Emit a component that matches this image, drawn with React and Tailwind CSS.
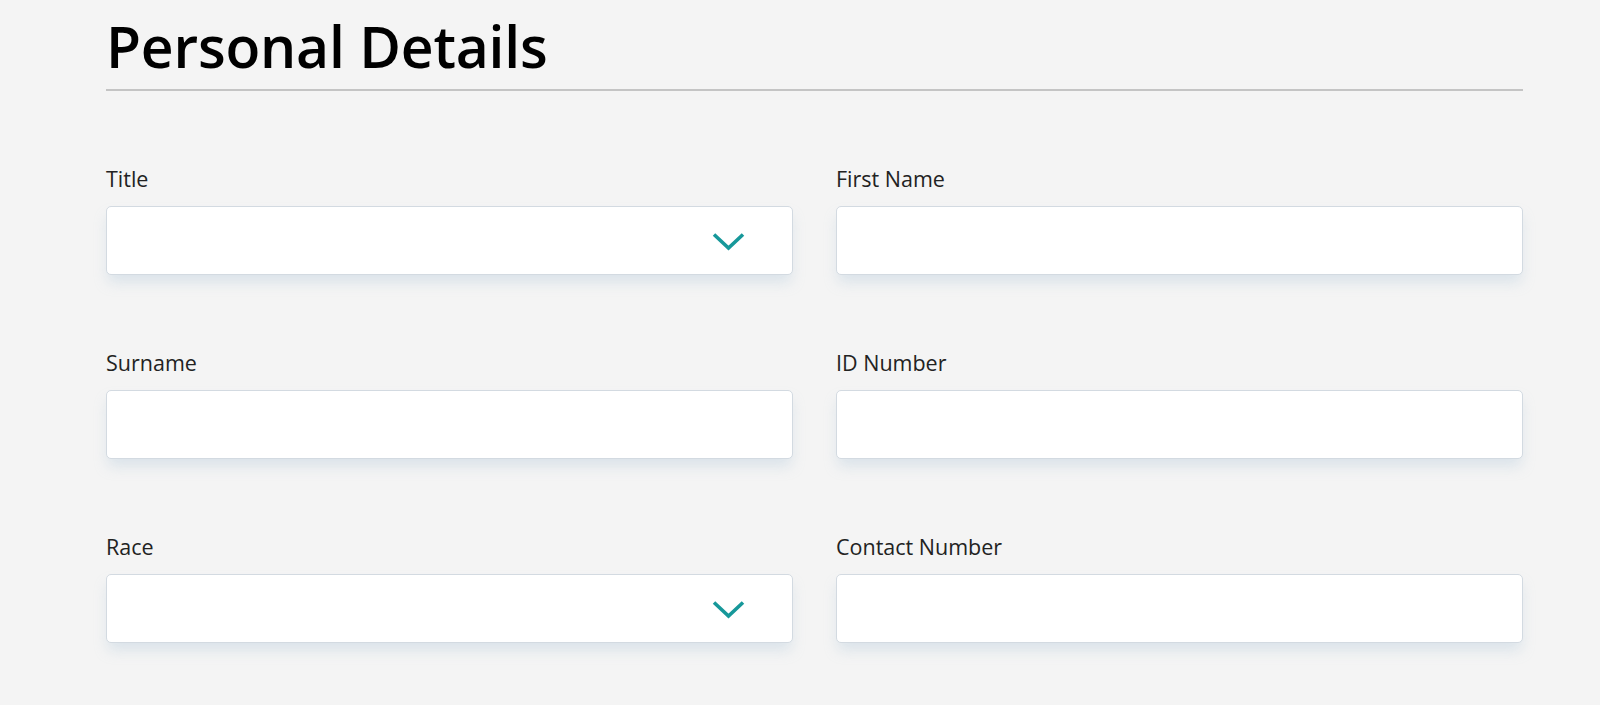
import React from "react";

const fields = [
  { label: "Title", select: true },
  { label: "First Name" },
  { label: "Surname" },
  { label: "ID Number" },
  { label: "Race", select: true },
  { label: "Contact Number" },
];

function Chevron() {
  return (
    <svg width="33" height="20" viewBox="0 0 33 20" fill="none">
      <path d="M2 2.5 L16.5 16 L31 2.5" stroke="#17989a" strokeWidth="3.6" />
    </svg>
  );
}

function Field({ label, select }) {
  return (
    <div className="flex flex-col">
      <label className="text-[21.5px] leading-[28px] text-[#222] mb-[13px]">{label}</label>
      <div className="relative h-[69px] rounded-[5px] bg-white border border-[#d3dae1] shadow-[0_9px_14px_-2px_rgba(170,195,215,0.35)]">
        {select && (
          <div className="absolute right-[47px] top-[25px]">
            <Chevron />
          </div>
        )}
      </div>
    </div>
  );
}

export default function App() {
  return (
    <div
      className="min-h-[705px] bg-[#f4f4f4] px-[106px] pt-[10px]"
      style={{ fontFamily: '"Open Sans", "Noto Sans", sans-serif' }}
    >
      <h1 className="text-[57px] font-semibold leading-[72px] text-black tracking-[-0.2px]">Personal Details</h1>
      <div className="mt-[7px] h-[2px] bg-[#c4c4c4] w-[1417px]" />
      <div className="mt-[74px] grid grid-cols-2 gap-x-[43px] gap-y-[74px] w-[1417px]">
        {fields.map((f) => (
          <Field key={f.label} {...f} />
        ))}
      </div>
    </div>
  );
}
